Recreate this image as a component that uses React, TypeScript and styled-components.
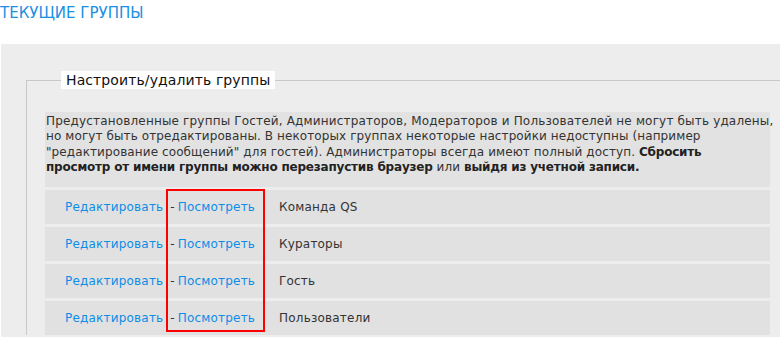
import styled, { createGlobalStyle } from "styled-components";

const GlobalStyle = createGlobalStyle`
  html, body {
    margin: 0;
    padding: 0;
    background: #fff;
    overflow: hidden;
  }
  body {
    font-family: "DejaVu Sans", Verdana, sans-serif;
    font-size: 12px;
    color: #333;
  }
`;

const groups = ["Команда QS", "Кураторы", "Гость", "Пользователи"];

const App = () => {
  return (
    <>
      <GlobalStyle />
      <Title>ТЕКУЩИЕ ГРУППЫ</Title>
      <Panel>
        <Fieldset>
          <Legend>Настроить/удалить группы</Legend>
          <Description>
            <Line $wide>
              Предустановленные группы Гостей, Администраторов, Модераторов и Пользователей не могут быть удалены,
            </Line>
            <Line>
              но могут быть отредактированы. В некоторых группах некоторые настройки недоступны (например
            </Line>
            <Line>
              "редактирование сообщений" для гостей). Администраторы всегда имеют полный доступ.{" "}
              <b>Сбросить</b>
            </Line>
            <Line>
              <b>просмотр от имени группы можно перезапустив браузер</b> или{" "}
              <b>выйдя из учетной записи.</b>
            </Line>
          </Description>
          <RowList>
            {groups.map((name) => (
              <Row key={name}>
                <Actions>
                  <Link href="#">Редактировать</Link>
                  <Dash>-</Dash>
                  <Link href="#">Посмотреть</Link>
                </Actions>
                <Name>{name}</Name>
              </Row>
            ))}
            <Highlight />
          </RowList>
        </Fieldset>
      </Panel>
    </>
  );
};

const Title = styled.div`
  padding-top: 4px;
  height: 44px;
  box-sizing: border-box;
  font-size: 15px;
  line-height: 18px;
  color: #1a8fe3;
  text-transform: uppercase;
`;

const Panel = styled.div`
  margin-left: 1px;
  background: #ededed;
  padding: 27px 0 0 25px;
  height: 300px;
  box-sizing: border-box;
`;

const Fieldset = styled.fieldset`
  margin: 0;
  border: none;
  border-top: 1px solid #c8c8c8;
  border-left: 1px solid #c8c8c8;
  padding: 23px 10px 0 18px;
  min-width: 0;
`;

const Legend = styled.legend`
  margin-left: 16px;
  padding: 0 5px;
  background: #fff;
  font-size: 14px;
  line-height: 18px;
  letter-spacing: 0.1px;
  color: #111;
`;

const Description = styled.div`
  background: #e2e2e2;
  padding: 2px 4px 12px 1px;
  line-height: 15.3px;
  color: #333;
`;

const Line = styled.div<{ $wide?: boolean }>`
  white-space: nowrap;
  letter-spacing: ${(p) => (p.$wide ? "0.17px" : "0.1px")};

  b {
    color: #222;
    letter-spacing: -0.2px;
  }
`;

const RowList = styled.div`
  position: relative;
  display: flex;
  flex-direction: column;
  gap: 3px;
  margin-top: 3px;
`;

const Row = styled.div`
  display: flex;
  align-items: center;
  height: 34px;
  background: #e1e1e1;
`;

const Actions = styled.div`
  width: 234px;
  padding-left: 20px;
  box-sizing: border-box;
  white-space: nowrap;
  display: flex;
  align-items: center;
`;

const Link = styled.a`
  color: #0d8de6;
  text-decoration: none;
  letter-spacing: 0.2px;
`;

const Dash = styled.span`
  margin: 0 3px 0 7px;
  color: #333;
`;

const Name = styled.span`
  color: #333;
  letter-spacing: 0.2px;
`;

const Highlight = styled.div`
  position: absolute;
  left: 121px;
  top: -1px;
  width: 99px;
  height: 143px;
  box-sizing: border-box;
  border: 2px solid #ff0000;
  pointer-events: none;
`;

export default App;
